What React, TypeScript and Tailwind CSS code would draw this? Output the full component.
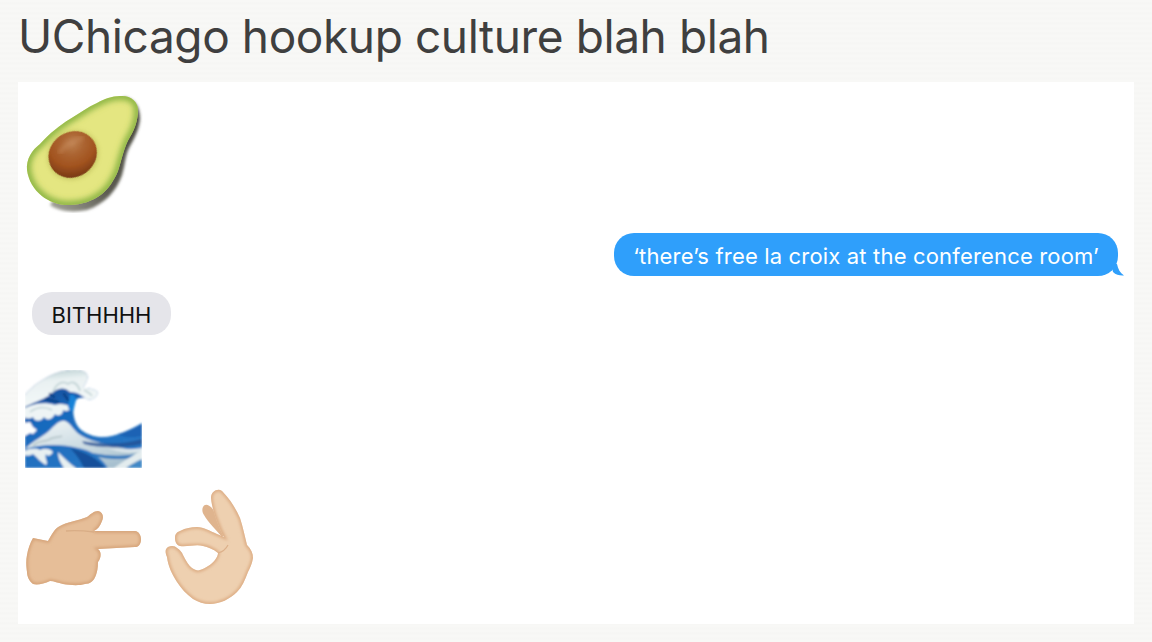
import React from 'react';

const AVOCADO_BODY =
  'M120 96C130 95 138 101 138 110C138 120 135 129 130 137C124 147 122 159 118 171C114 181 108 189 102 194C93 201 81 205 70 205C50 206 30 192 27 170C26 159 32 150 40 144C50 133 60 125 70 119C80 113 88 107 97 103C104 99 112 96 120 96Z';

const POINT_BODY =
  'M33 538L48 541C52 534 55 528 60 526C66 522 78 521 87 517C91 514 94 511 98 511C103 512 104 517 102 521C100 526 98 529 94 531L135 531C143 532 143 547 135 547L98 549C102 552 101 558 98 562C98 568 97 572 96 575C94 581 90 584 85 584C78 586 70 585 63 584C58 583 54 581 50 581C44 584 37 585 33 584C29 581 27 576 27 572C26 565 26 560 27 555C28 549 30 543 33 538Z';

const OK_BODY =
  'M211 498C211 491 218 488 222 491C230 499 236 509 240 518C243 527 245 537 247 545C251 549 253 553 253 558C252 564 250 568 248 572C245 580 242 587 237 592C230 599 220 604 210 604C204 604 198 602 193 599C186 594 181 588 177 582C172 574 168 566 167 557C165 552 165 549 168 547C172 545 175 546 177 548C180 550 182 552 183 555C186 561 189 566 192 568C195 570 198 571 200 570C206 568 212 564 215 560C217 557 218 555 218 553C213 549 208 547 203 546C196 544 188 547 180 546C176 545 175 541 175 538C175 534 177 532 180 531C186 528 191 527 197 527C204 527 210 531 217 534L224 537C219 528 212 510 211 498Z';

const Avocado = () => (
  <svg width="120" height="120" viewBox="25 93 120 120" className="block">
    <defs>
      <radialGradient id="pit" cx="0.62" cy="0.3" r="0.8">
        <stop offset="0" stopColor="#bd8050" />
        <stop offset="0.3" stopColor="#ab6431" />
        <stop offset="0.6" stopColor="#a2531f" />
        <stop offset="1" stopColor="#6d3312" />
      </radialGradient>
      <linearGradient id="shade" x1="1" y1="0" x2="0" y2="1">
        <stop offset="0" stopColor="#46463a" />
        <stop offset="0.6" stopColor="#5c5b52" />
        <stop offset="1" stopColor="#a5a59c" />
      </linearGradient>
      <filter id="soft"><feGaussianBlur stdDeviation="0.7" /></filter>
      <filter id="shadeBlur"><feGaussianBlur stdDeviation="1.800" /></filter>
      <filter id="rim"><feGaussianBlur stdDeviation="3" /></filter>
      <filter id="glow"><feGaussianBlur stdDeviation="2" /></filter>
      <clipPath id="avoClip">
        <path d={AVOCADO_BODY} />
      </clipPath>
    </defs>
    <path
      d="M124 97C134 99 140 106 140 119C139 130 134 139 129 148C125 156 125 165 122 175C117 190 105 204 87 210C72 213 58 211 50 205L60 190L110 120Z"
      fill="url(#shade)"
      filter="url(#shadeBlur)"
    />
    <g filter="url(#soft)">
      <g clipPath="url(#avoClip)">
        <rect x="20" y="90" width="125" height="120" fill="#e4e681" />
        <path d={AVOCADO_BODY} fill="none" stroke="#7fae3a" strokeWidth="7" filter="url(#rim)" />
      </g>
    </g>
    <ellipse cx="73" cy="155" rx="26.500" ry="24" transform="rotate(-35 73 155)" fill="#a3a23c" opacity="0.4" filter="url(#glow)" />
    <ellipse cx="72.700" cy="154.500" rx="25" ry="22.500" transform="rotate(-35 72.700 154.500)" fill="url(#pit)" filter="url(#soft)" />
    <path d="M60 152C66 144 74 140 82 138" stroke="#c98d5f" strokeWidth="4" fill="none" strokeLinecap="round" opacity="0.55" filter="url(#glow)" />
  </svg>
);

const Wave = () => (
  <svg width="117" height="98" viewBox="25 370 117 98" className="block">
    <defs>
      <linearGradient id="sea" x1="0.2" y1="0" x2="0.7" y2="1">
        <stop offset="0" stopColor="#14418a" />
        <stop offset="0.4" stopColor="#1769bd" />
        <stop offset="1" stopColor="#2a78c4" />
      </linearGradient>
      <linearGradient id="crest" x1="0" y1="0" x2="0.2" y2="1">
        <stop offset="0" stopColor="#b4cacc" />
        <stop offset="0.35" stopColor="#e9f1f2" />
        <stop offset="1" stopColor="#f4f8f8" />
      </linearGradient>
      <linearGradient id="swell" x1="0" y1="0" x2="0.6" y2="1">
        <stop offset="0" stopColor="#f2f6f7" />
        <stop offset="0.7" stopColor="#c6d7df" />
        <stop offset="1" stopColor="#a7c0cf" />
      </linearGradient>
      <filter id="waveSoft"><feGaussianBlur stdDeviation="0.8" /></filter>
    </defs>
    <g filter="url(#waveSoft)">
      <path d="M25 395C32 386 46 376 60 372C68 370 80 368 86 373C90 378 85 384 83 388C90 388 98 390 98 393C96 398 91 402 85 398C80 397 76 398 75 402C72 408 73 418 77 425C81 432 90 436 100 437C114 438 130 430 142 423V468H25Z" fill="url(#sea)" />
      <path d="M25 395C32 386 46 376 60 372C68 370 80 368 86 373C90 378 85 384 83 388C90 388 98 390 98 393C96 398 91 402 85 398C80 394 76 392 70 392C64 386 56 388 50 395C42 400 32 403 25 407Z" fill="url(#crest)" />
      <path d="M53 392C56 384 62 380 68 384C73 380 78 384 80 391" stroke="#c2d3d5" strokeWidth="1.800" fill="none" />
      <path d="M84 390C88 392 90 393 92 396" stroke="#c2d3d5" strokeWidth="1.500" fill="none" />
      <path d="M25 408C34 403 46 402 55 405C60 403 66 404 71 407C70 411 66 412 63 410C63 415 58 417 55 414C52 420 47 421 44 417C40 423 34 421 33 417C30 419 27 419 25 417Z" fill="#eef4f5" />
      <path d="M30 412C38 406 46 407 52 410" stroke="#c2d3d5" strokeWidth="1.500" fill="none" />
      <path d="M46 399L58 402M50 394L54 397M64 394L68 400" stroke="#0f3f85" strokeWidth="2.500" strokeLinecap="round" />
      <path d="M70 395C73 394 76 396 76 400L73 412L68 408Z" fill="#1882d8" />
      <path d="M25 423L30 422L33 427L37 430L33 434L30 433L25 436Z" fill="#ffffff" />
      <path d="M25 449C34 440 44 436 50 430C56 424 60 420 65 421C72 424 74 432 82 436C92 442 112 446 142 452V468H108C100 456 90 450 78 448C62 444 42 444 25 449Z" fill="url(#swell)" />
      <path d="M33 446C38 440 44 442 48 440C54 436 58 438 62 436" stroke="#b6c6ca" strokeWidth="1.800" fill="none" />
      <path d="M25 451C30 448 36 448 40 450C44 448 50 448 53 452C50 457 47 456 46 454C44 458 49 463 46 465C40 462 36 456 33 454C30 456 27 456 25 455Z" fill="#e8f0f1" />
      <path d="M82 441C100 444 122 445 142 439V444C122 449 98 448 84 444Z" fill="#234f93" opacity="0.8" />
      <path d="M118 434C126 432 134 428 142 424V436C132 438 124 438 118 434Z" fill="#1b62b4" />
      <path d="M70 448C86 452 96 458 106 468H84C80 460 76 454 70 448Z" fill="#174f9a" />
      <path d="M106 447C118 450 130 450 142 448V451C128 454 116 452 106 447Z" fill="#dfe9ed" />
      <path d="M92 453C108 456 124 457 142 453V456C130 460 104 460 96 456Z" fill="#2d78bd" />
      <path d="M114 468C122 462 132 456 142 450V459C134 462 130 465 126 468Z" fill="#e3ecee" />
      <path d="M126 468C132 464 136 462 142 459V468Z" fill="#3f88c6" />
      <path d="M58 452C64 458 70 464 76 468H64C60 462 58 458 58 452Z" fill="#e8f0f1" />
    </g>
  </svg>
);

const PointingHand = () => (
  <svg width="117" height="76" viewBox="25 510 117 76" className="block">
    <defs>
      <filter id="handEdge"><feGaussianBlur stdDeviation="0.6" /></filter>
      <filter id="handRim"><feGaussianBlur stdDeviation="1.800" /></filter>
      <clipPath id="pointClip">
        <path d={POINT_BODY} />
      </clipPath>
    </defs>
    <g filter="url(#handEdge)">
      <g clipPath="url(#pointClip)">
        <rect x="20" y="505" width="125" height="85" fill="#e6be98" />
        <path d={POINT_BODY} fill="none" stroke="#d5a378" strokeWidth="3.500" filter="url(#handRim)" />
      </g>
    </g>
    <path d="M66 531C76 530 86 531 94 532" stroke="#d9ad86" strokeWidth="1.400" fill="none" filter="url(#handEdge)" />
  </svg>
);

const OkHand = () => (
  <svg width="90" height="116" viewBox="165 489 90 116" className="block">
    <defs>
      <filter id="okEdge"><feGaussianBlur stdDeviation="0.6" /></filter>
      <filter id="okRim"><feGaussianBlur stdDeviation="1.800" /></filter>
      <clipPath id="okClip">
        <path d={OK_BODY} />
      </clipPath>
    </defs>
    <g filter="url(#okEdge)">
      <path d="M203 507C205 503 209 505 212 508L228 532L222 537C216 530 208 522 204 515C202 512 202 509 203 507Z" fill="#dfb48e" />
      <g clipPath="url(#okClip)">
        <rect x="160" y="485" width="100" height="125" fill="#eed0b0" />
        <path d={OK_BODY} fill="none" stroke="#dcab82" strokeWidth="3.500" filter="url(#okRim)" />
      </g>
      <path d="M218 553C222 552 226 549 228 545" stroke="#dcb08a" strokeWidth="1.200" fill="none" />
    </g>
  </svg>
);

export default function App() {
  return (
    <div
      className="h-[642px] w-full overflow-hidden bg-[#f7f7f5] bg-[repeating-linear-gradient(0deg,#f8f8f6_0px,#f8f8f6_2px,#f6f6f4_3px,#f7f7f5_5px)] pr-[18px] pl-[18px] text-[#3f3f3f]"
      style={{ fontFamily: 'Inter, "Liberation Sans", sans-serif' }}
    >
      <h1 className="h-[82px] pt-[8px] text-[46px] leading-[56px] font-normal tracking-[-0.4px]">
        UChicago hookup culture blah blah
      </h1>
      <div className="flex h-[542px] flex-col bg-white pr-[16px] pl-[7px]">
        <div className="mt-[11px]">
          <Avocado />
        </div>
        <div className="relative mt-[20px] self-end">
          <div className="flex h-[43px] items-center rounded-[20px] bg-[#2f9ffb] pt-[4px] pr-[19px] pl-[19px] text-[22px] tracking-[0.17px] text-white">
            ‘there’s free la croix at the conference room’
          </div>
          <svg width="14" height="12" viewBox="0 0 14 12" className="absolute right-[-7px] bottom-0">
            <path d="M0 0L6 0C7 5 9 9 13 11.500C9 11.800 5 11 2 8Z" fill="#2f9ffb" />
          </svg>
        </div>
        <div className="mt-[16px] ml-[7px] flex h-[43px] w-[139px] items-center justify-center rounded-[20px] bg-[#e5e5ea] pt-[4px] text-[22px] text-[#111111]">
          BITHHHH
        </div>
        <div className="mt-[35px]">
          <Wave />
        </div>
        <div className="mt-[21px] flex items-start gap-[23px]">
          <div className="mt-[21px]">
            <PointingHand />
          </div>
          <OkHand />
        </div>
      </div>
    </div>
  );
}
